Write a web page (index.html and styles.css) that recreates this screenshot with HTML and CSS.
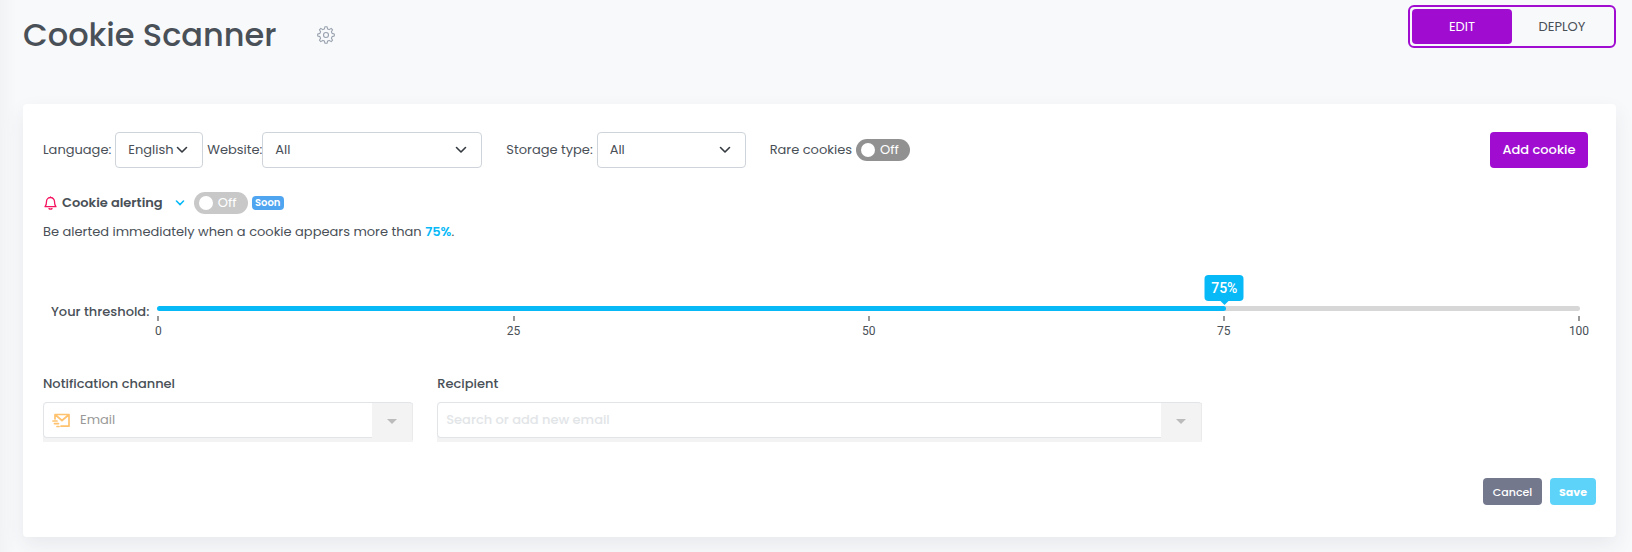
FILE: index.html
```
<!DOCTYPE html>
<html lang="en">
<head>
<meta charset="utf-8">
<meta name="viewport" content="width=device-width, initial-scale=1">
<title>Cookie Scanner</title>
<link rel="stylesheet" href="styles.css">
</head>
<body>
<header class="page-header">
    <h1>Cookie Scanner</h1>
    <button type="button" class="settings" aria-label="Settings">
        <svg width="18" height="18" viewBox="0 0 18 18" fill="none" stroke="#98a1ae" stroke-width="1.100" stroke-linejoin="round"><path d="M7.400 2.900L8 .7h2l.6 2.200 1.600.7 2-1.200 1.400 1.400-1.200 2 .7 1.600 2.200.6v2l-2.200.6-.7 1.600 1.200 2-1.400 1.400-2-1.200-1.600.7-.6 2.200H8l-.6-2.200-1.600-.7-2 1.200-1.400-1.400 1.200-2-.7-1.600L.7 10V8l2.200-.6.7-1.600-1.200-2 1.400-1.400 2 1.200z"/><circle cx="9" cy="9" r="2.500"/></svg>
    </button>
    <div class="mode-switch">
        <button type="button" class="active">EDIT</button>
        <button type="button">DEPLOY</button>
    </div>
</header>

<main class="card">
    <div class="filters">
        <label for="language">Language:</label>
        <select id="language" class="select select-language">
            <option>English</option>
        </select>
        <label for="website" class="label-website">Website:</label>
        <select id="website" class="select select-website">
            <option>All</option>
        </select>
        <label for="storage" class="label-storage">Storage type:</label>
        <select id="storage" class="select select-storage">
            <option>All</option>
        </select>
        <label for="rare" class="label-rare">Rare cookies</label>
        <label class="toggle"><input type="checkbox" id="rare"><span>Off</span></label>
        <button type="button" class="btn btn-add">Add cookie</button>
    </div>

    <div class="alerting">
        <svg class="bell" width="13" height="14" viewBox="0 0 13 14" fill="none" stroke="#f5145f" stroke-width="1.3" stroke-linecap="round" stroke-linejoin="round"><path d="M6.500 .8v.7M1 10.700h11C10.800 9.700 10.500 8.700 10.500 5.500a4 4 0 0 0-8 0C2.500 8.700 2.200 9.700 1 10.700zM5 12.600q1.500 1 3 0"/></svg>
        <label for="alerting" class="alerting-title">Cookie alerting</label>
        <button type="button" class="expand" aria-label="Toggle details">
            <svg width="10" height="6" viewBox="0 0 10 6" fill="none" stroke="#08b9f7" stroke-width="1.600" stroke-linecap="round"><path d="M1.500 1l3.500 3.500L8.500 1"/></svg>
        </button>
        <label class="toggle disabled"><input type="checkbox" id="alerting" disabled><span>Off</span></label>
        <span class="badge">Soon</span>
    </div>
    <p class="description">Be alerted immediately when a cookie appears more than <strong>75%</strong>.</p>

    <div class="threshold">
        <label for="threshold">Your threshold:</label>
        <div class="slider">
            <output class="tooltip" for="threshold">75%</output>
            <input type="range" id="threshold" min="0" max="100" value="75">
            <div class="ticks">
                <span>0</span>
                <span>25</span>
                <span>50</span>
                <span>75</span>
                <span>100</span>
            </div>
        </div>
    </div>

    <div class="fields">
        <div class="field">
            <label for="channel">Notification channel</label>
            <div class="combo">
                <div class="combo-value">
                    <svg width="18" height="15" viewBox="0 0 18 15" fill="none" stroke="#ffc26e" stroke-width="1.700" stroke-linecap="round" stroke-linejoin="round"><path d="M3 6V1.500h14v11.700H9M3.500 2l6.500 5.500L16.500 2M1 8h4M2.500 10.600h4M5 13.500h2"/></svg>
                    <select id="channel" disabled>
                        <option>Email</option>
                    </select>
                </div>
                <button type="button" class="combo-arrow" aria-label="Open channels" disabled></button>
            </div>
        </div>
        <div class="field field-recipient">
            <label for="recipient">Recipient</label>
            <div class="combo">
                <div class="combo-value">
                    <input type="text" id="recipient" placeholder="Search or add new email" disabled>
                </div>
                <button type="button" class="combo-arrow" aria-label="Open recipients" disabled></button>
            </div>
        </div>
    </div>

    <div class="actions">
        <button type="button" class="btn btn-small btn-cancel">Cancel</button>
        <button type="button" class="btn btn-small btn-save">Save</button>
    </div>
</main>
</body>
</html>
```
FILE: styles.css
```
* {
    box-sizing: border-box;
}
body {
    background: #f8f9fb linear-gradient(to right, #f2f3f5, #f8f9fb) no-repeat left / 16px 100%;
    color: #495057;
    font: 13px/20px Poppins, Inter, sans-serif;
    margin: 0;
    padding: 5px 16px 15px 23px;
}
button, input, select {
    color: inherit;
    font: inherit;
}
button {
    background: none;
    border: 0;
    cursor: pointer;
    padding: 0;
}
svg {
    display: block;
}

/* header */
.page-header {
    align-items: flex-start;
    display: flex;
    height: 99px;
}
.page-header h1 {
    font-size: 32px;
    font-weight: 500;
    line-height: 60px;
    margin: 0;
}
.settings {
    margin: 21px 0 0 40px;
}
.mode-switch {
    border: 2px solid #a00dd1;
    border-radius: 6px;
    display: flex;
    height: 43px;
    margin-left: auto;
    padding: 2px;
}
.mode-switch button {
    border-radius: 4px;
    width: 100px;
}
.mode-switch .active {
    background: #a00dd1;
    color: #fff;
}

/* card */
.card {
    background: #fff;
    border-radius: 4px;
    box-shadow: 0 8px 20px rgba(40, 50, 70, .08);
    padding: 28px 20px 32px;
}
.filters {
    align-items: center;
    display: flex;
}
.select {
    appearance: none;
    background: #fff url("data:image/svg+xml,%3Csvg xmlns='http://www.w3.org/2000/svg' width='12' height='8' fill='none' stroke='%23343a40' stroke-width='1.6' stroke-linecap='round' stroke-linejoin='round'%3E%3Cpath d='M1.500 1.500L6 6l4.500-4.500'/%3E%3C/svg%3E") no-repeat right 14px center;
    border: 1px solid #ced4da;
    border-radius: 4px;
    height: 36px;
    margin-left: 4px;
    padding: 0 12px;
}
.select-language {
    width: 88px;
}
.select-website {
    margin-left: 0;
    width: 220px;
}
.select-storage {
    width: 149px;
}
.label-website {
    margin-left: 4px;
}
.label-storage, .label-rare {
    margin-left: 24px;
}
.toggle {
    align-items: center;
    background: #919191;
    border-radius: 11px;
    color: #fff;
    display: flex;
    gap: 5px;
    height: 22px;
    margin-left: 4px;
    padding-left: 5px;
    width: 54px;
}
.toggle input {
    appearance: none;
    background: #fff;
    border-radius: 50%;
    height: 14px;
    margin: 0;
    width: 14px;
}
.toggle.disabled {
    background: #c8c8c8;
    margin-left: 9px;
}
.btn {
    border-radius: 4px;
    color: #fff;
    font-weight: 500;
    white-space: nowrap;
}
.btn-add {
    background: #a00dd1;
    height: 36px;
    margin: 0 8px 0 auto;
    width: 98px;
}

/* alerting */
.alerting {
    align-items: center;
    display: flex;
    margin-top: 24px;
}
.bell {
    margin: 0 5px 0 1px;
}
.alerting-title {
    font-weight: 600;
}
.expand {
    margin-left: 12px;
}
.badge {
    background: #50a5f1;
    border-radius: 4px;
    color: #fff;
    font-size: 10px;
    font-weight: 600;
    line-height: 14px;
    margin-left: 4px;
    text-align: center;
    width: 32px;
}
.description {
    margin: 8px 0 0;
}
.description strong {
    color: #08b9f7;
    font-weight: 600;
}

/* threshold slider */
.threshold {
    align-items: flex-start;
    display: flex;
    gap: 8px;
    padding: 60px 16px 0 8px;
}
.threshold label {
    font-weight: 500;
}
.slider {
    flex: 1;
    padding-top: 4px;
    position: relative;
}
.slider input {
    appearance: none;
    background: linear-gradient(to right, #08b9f7 75%, #d7d7d7 75%);
    border-radius: 3px;
    display: block;
    height: 5px;
    margin: 0;
    width: 100%;
}
.slider input::-webkit-slider-thumb {
    appearance: none;
    background: #08b9f7;
    border-radius: 3px;
    height: 5px;
    width: 5px;
}
.tooltip {
    background: #08b9f7;
    border-radius: 4px;
    bottom: 40px;
    color: #fff;
    font: 500 14px/26px Roboto, sans-serif;
    left: 75%;
    position: absolute;
    text-align: center;
    transform: translateX(-50%);
    width: 39px;
}
.tooltip::after {
    border: 4px solid transparent;
    border-top-color: #08b9f7;
    border-bottom: 0;
    content: "";
    left: 16px;
    position: absolute;
    top: 100%;
}
.ticks {
    display: flex;
    font: 12px/20px Roboto, sans-serif;
    justify-content: space-between;
    margin-top: 5px;
}
.ticks span {
    align-items: center;
    display: flex;
    flex-direction: column;
    width: 2px;
}
.ticks span::before {
    background: #999;
    content: "";
    height: 5px;
    width: 2px;
}

/* notification fields */
.fields {
    display: grid;
    gap: 24px;
    grid-template-columns: repeat(4, 1fr);
    margin-top: 33px;
}
.field label {
    display: block;
    font-weight: 500;
    margin-bottom: 8px;
}
.field-recipient {
    grid-column: span 2;
}
.combo {
    background: #f3f3f3;
    border-top: 1px solid #e2e5e8;
    border-radius: 4px 4px 0 0;
    display: flex;
    height: 40px;
}
.combo-value {
    align-items: center;
    background: #fff;
    border: 1px solid #e2e5e8;
    border-width: 0 0 1px 1px;
    border-radius: 4px 0 0 4px;
    display: flex;
    flex: 1;
    gap: 10px;
    height: 35px;
    padding-left: 8px;
}
.combo-value select, .combo-value input {
    appearance: none;
    background: none;
    border: 0;
    color: #999;
    flex: 1;
    opacity: 1;
    padding: 0;
}
.combo-value input::placeholder {
    color: #e2e5e8;
    font-weight: 500;
}
.combo-arrow {
    align-items: center;
    border-right: 1px solid #e8eaec;
    display: flex;
    height: 37px;
    justify-content: center;
    width: 41px;
}
.combo-arrow::before {
    border: 5px solid transparent;
    border-bottom: 0;
    border-top-color: #bbb;
    content: "";
}

/* buttons */
.actions {
    display: flex;
    gap: 8px;
    justify-content: flex-end;
    margin-top: 36px;
}
.btn-small {
    font-size: 11px;
    height: 27px;
    padding: 0;
}
.btn-cancel {
    background: #74788d;
    width: 59px;
}
.btn-save {
    background: #5dd3f9;
    font-weight: 700;
    width: 46px;
}
```
